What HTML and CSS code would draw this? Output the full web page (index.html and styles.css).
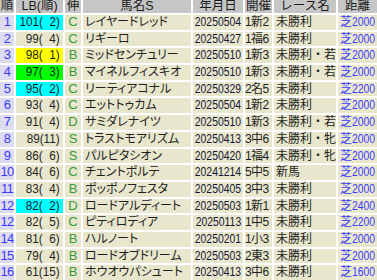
FILE: index.html
```html
<!DOCTYPE html>
<html lang="ja">
<head>
<meta charset="utf-8">
<title>LB</title>
<link rel="stylesheet" href="styles.css">
</head>
<body>
<div class="grid">
  <div class="row head">
    <div class="c">順</div><div class="c">LB(順)</div><div class="c">伸</div><div class="c">馬名S</div><div class="c">年月日</div><div class="c">開催</div><div class="c">レース名</div><div class="c">距離</div>
  </div>
  <div class="row"><div class="no">1</div><div class="lb cyan"><span>101(&#8199;2)</span></div><div class="nobi">C</div><div class="name">レイヤードレッド</div><div class="date"><span>20250504</span></div><div class="kai">1新2</div><div class="race">未勝利</div><div class="dist">芝<span>2000</span></div></div>
  <div class="row"><div class="no">2</div><div class="lb"><span>99(&#8199;4)</span></div><div class="nobi">C</div><div class="name">リギーロ</div><div class="date"><span>20250427</span></div><div class="kai">1福6</div><div class="race">未勝利</div><div class="dist">芝<span>2000</span></div></div>
  <div class="row"><div class="no">3</div><div class="lb yellow"><span>98(&#8199;1)</span></div><div class="nobi">B</div><div class="name">ミッドセンチュリー</div><div class="date"><span>20250510</span></div><div class="kai">1新3</div><div class="race">未勝利・若</div><div class="dist">芝<span>2000</span></div></div>
  <div class="row"><div class="no">4</div><div class="lb lime"><span>97(&#8199;3)</span></div><div class="nobi">B</div><div class="name">マイネルフィスキオ</div><div class="date"><span>20250510</span></div><div class="kai">1新3</div><div class="race">未勝利・若</div><div class="dist">芝<span>2000</span></div></div>
  <div class="row"><div class="no">5</div><div class="lb cyan"><span>95(&#8199;2)</span></div><div class="nobi">C</div><div class="name">リーティアコナル</div><div class="date"><span>20250329</span></div><div class="kai">2名5</div><div class="race">未勝利</div><div class="dist">芝<span>2200</span></div></div>
  <div class="row"><div class="no">6</div><div class="lb"><span>93(&#8199;4)</span></div><div class="nobi">C</div><div class="name">エットトゥカム</div><div class="date"><span>20250504</span></div><div class="kai">1新2</div><div class="race">未勝利</div><div class="dist">芝<span>2000</span></div></div>
  <div class="row"><div class="no">7</div><div class="lb"><span>91(&#8199;4)</span></div><div class="nobi">D</div><div class="name">サミダレナイツ</div><div class="date"><span>20250510</span></div><div class="kai">1新3</div><div class="race">未勝利・若</div><div class="dist">芝<span>2000</span></div></div>
  <div class="row"><div class="no">8</div><div class="lb"><span>89(11)</span></div><div class="nobi">S</div><div class="name">トラストモアリズム</div><div class="date"><span>20250413</span></div><div class="kai">3中6</div><div class="race">未勝利・牝</div><div class="dist">芝<span>2000</span></div></div>
  <div class="row"><div class="no">9</div><div class="lb"><span>86(&#8199;6)</span></div><div class="nobi">S</div><div class="name">パルピタシオン</div><div class="date"><span>20250420</span></div><div class="kai">1福4</div><div class="race">未勝利・牝</div><div class="dist">芝<span>2000</span></div></div>
  <div class="row"><div class="no">10</div><div class="lb"><span>84(&#8199;6)</span></div><div class="nobi">C</div><div class="name">チェントポルテ</div><div class="date"><span>20241214</span></div><div class="kai">5中5</div><div class="race">新馬</div><div class="dist">芝<span>2000</span></div></div>
  <div class="row"><div class="no">11</div><div class="lb"><span>83(&#8199;4)</span></div><div class="nobi">B</div><div class="name">ポッポノフェスタ</div><div class="date"><span>20250405</span></div><div class="kai">3中3</div><div class="race">未勝利</div><div class="dist">芝<span>2000</span></div></div>
  <div class="row"><div class="no">12</div><div class="lb cyan"><span>82(&#8199;2)</span></div><div class="nobi">D</div><div class="name">ロードアルディート</div><div class="date"><span>20250503</span></div><div class="kai">1新1</div><div class="race">未勝利</div><div class="dist">芝<span>2400</span></div></div>
  <div class="row"><div class="no">12</div><div class="lb"><span>82(&#8199;5)</span></div><div class="nobi">C</div><div class="name">ピティロディア</div><div class="date"><span>20250113</span></div><div class="kai">1中5</div><div class="race">未勝利</div><div class="dist">芝<span>2200</span></div></div>
  <div class="row"><div class="no">14</div><div class="lb"><span>81(&#8199;6)</span></div><div class="nobi">B</div><div class="name">ハルノート</div><div class="date"><span>20250201</span></div><div class="kai">1小3</div><div class="race">未勝利</div><div class="dist">芝<span>2000</span></div></div>
  <div class="row"><div class="no">15</div><div class="lb"><span>79(&#8199;4)</span></div><div class="nobi">B</div><div class="name">ロードオブドリーム</div><div class="date"><span>20250503</span></div><div class="kai">2東3</div><div class="race">未勝利</div><div class="dist">芝<span>2000</span></div></div>
  <div class="row"><div class="no">16</div><div class="lb"><span>61(15)</span></div><div class="nobi">B</div><div class="name">ホウオウパシュート</div><div class="date"><span>20250413</span></div><div class="kai">3中6</div><div class="race">未勝利</div><div class="dist">芝<span>1600</span></div></div>
</div>
</body>
</html>
```

FILE: styles.css
```css
html, body {
  margin: 0;
  padding: 0;
  background: #ffffff;
}
.grid {
  display: grid;
  grid-template-columns: 14px 47px 16px 108px 50px 27px 62px 39px;
  grid-template-rows: 13px repeat(16, 14.7px);
  gap: 2px;
  width: 377px;
  font-family: "Liberation Sans", "Noto Sans CJK JP", sans-serif;
  font-size: 12px;
  color: #1e1e1e;
}
.row {
  display: contents;
}
.row > div {
  background: #e8e7cd;
  line-height: 14.7px;
  white-space: nowrap;
  overflow: hidden;
}
.head > div {
  background: #c6c6c6;
  line-height: 13px;
  text-align: center;
  color: #1a1a1a;
  font-size: 12.5px;
}
.row > .no {
  background: #dcdcee;
  color: #3a3aff;
  text-align: center;
  font-size: 13px;
  letter-spacing: -0.8px;
}
.lb {
  display: flex;
  justify-content: flex-end;
  padding-right: 3px;
  font-size: 13px;
}
.lb span {
  display: inline-block;
  transform: scaleX(0.9);
  transform-origin: right center;
}
.row > .cyan { background: #00ffff; }
.row > .yellow { background: #ffff00; }
.row > .lime { background: #00ff00; }
.nobi {
  text-align: center;
  color: #3a9a3a;
  font-size: 13px;
}
.name {
  padding-left: 2px;
  font-feature-settings: "palt";
}
.date {
  display: flex;
  justify-content: center;
  font-size: 13px;
  color: #151535;
}
.date span {
  display: inline-block;
  transform: scaleX(0.8);
  transform-origin: center center;
}
.kai {
  letter-spacing: -0.6px;
}
.race {
  padding-left: 2px;
}
.dist {
  padding-left: 2px;
  color: #3b3bff;
}
.dist span {
  display: inline-block;
  font-size: 13px;
  transform: scaleX(0.8);
  transform-origin: left center;
}
```
